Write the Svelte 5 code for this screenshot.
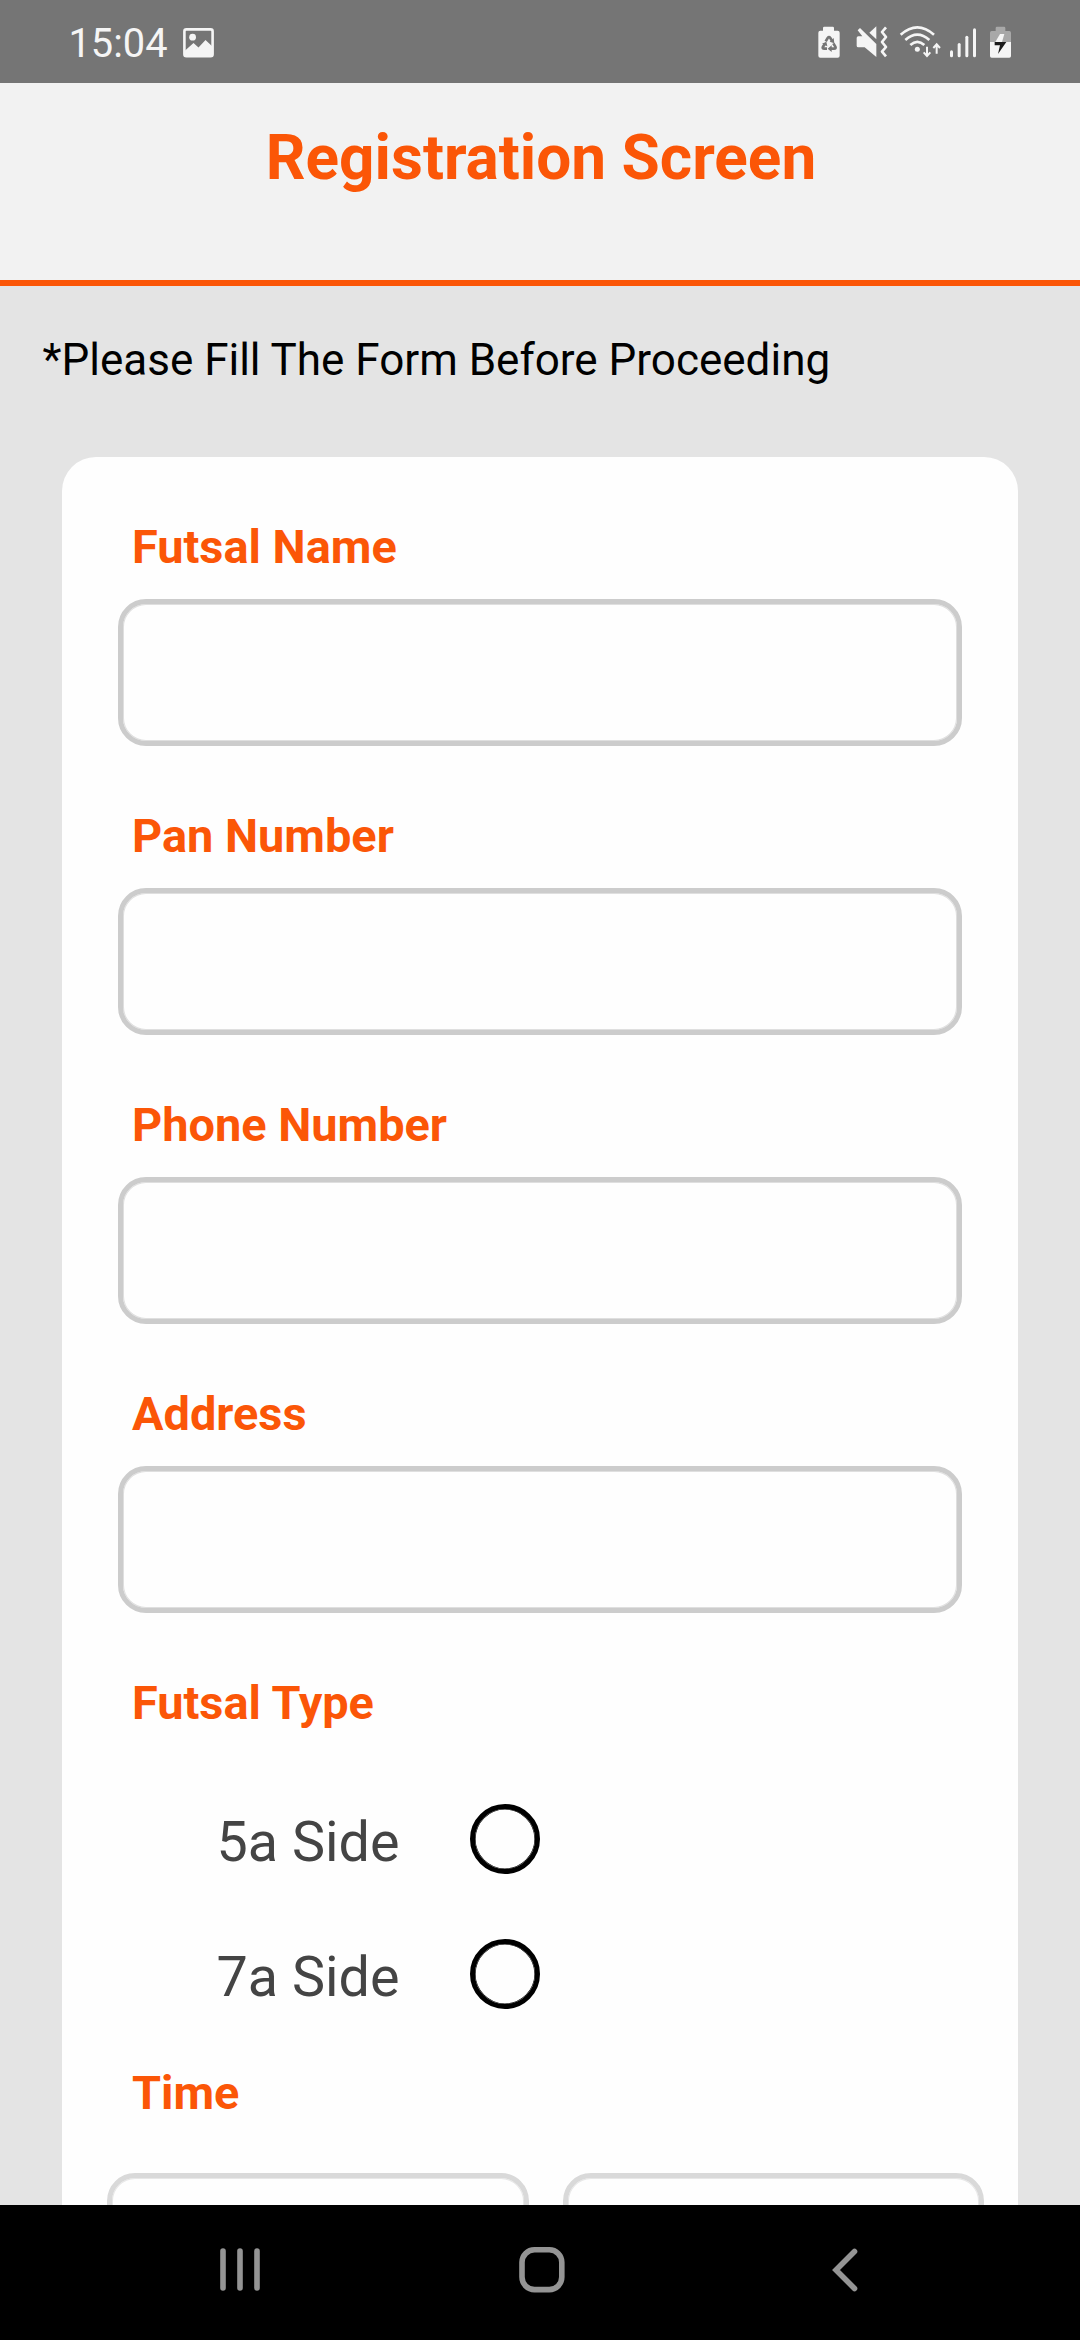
<script>
  const fields = ['Futsal Name', 'Pan Number', 'Phone Number', 'Address'];
  const types = ['5a Side', '7a Side'];
</script>

<div class="screen">
  <div class="status">
    <div class="left">
      <span class="clock">15:04</span>
      <svg class="photo" viewBox="0 0 31 30" width="31" height="30">
        <rect x="1.4" y="1.4" width="28.2" height="26.8" rx="2" fill="none" stroke="#f5f5f5" stroke-width="2.6" />
        <circle cx="9.6" cy="9.2" r="3.4" fill="#f5f5f5" />
        <path d="M1 23.5L10.5 15L15.5 19.5L22.5 12L30 19V28.5H1Z" fill="#f5f5f5" />
      </svg>
    </div>
    <svg class="indicators" viewBox="0 0 690 210" width="230" height="70" fill="#f5f5f5">
      <path d="M69 62V54q0-4 4-4H98q4 0 4 4V62H113q6 0 6 6V137q0 6-6 6H61q-6 0-6-6V68q0-6 6-6Z" />
      <g fill="none" stroke="#757575" stroke-width="8">
        <path d="M77 94L83 84Q87 79 91 84L97 94" />
        <path d="M75 101L69 110Q66 116 73 116H81" />
        <path d="M100 100L106 110Q109 116 102 116H92" />
      </g>
      <path d="M101 84L103 100L89 95ZM66 101L79 95L82 109ZM95 106V126L83 116Z" fill="#757575" />

      <path d="M170 84q0-5 5-5H187L173 61L180 54L229 102V141L194 112H175q-5 0-5-5Z" />
      <path d="M208 68L229 49V88Z" />
      <path d="M258 52L246 66L258 81L246 96L258 111L246 125L258 139" fill="none" stroke="#f5f5f5" stroke-width="8" stroke-linejoin="round" />

      <g fill="none" stroke="#f5f5f5" stroke-width="8">
        <path d="M302 74Q352 30 402 74" />
        <path d="M316 90Q352 58 388 90" />
        <path d="M331 105Q352 86 373 105" />
        <path d="M381 110V137M371 127L381 138L391 127M410 131V104M400 114L410 103L420 114" stroke-width="6" />
      </g>
      <circle cx="352" cy="118" r="7.5" />

      <rect x="450" y="121" width="9" height="21" rx="4.5" />
      <rect x="473" y="99" width="9" height="43" rx="4.5" />
      <rect x="496" y="77" width="9" height="65" rx="4.5" />
      <rect x="519" y="55" width="9" height="87" rx="4.5" />

      <path d="M570 96V68q0-5 5-5H587V54q0-4 4-4H612q4 0 4 4V63H628q5 0 5 5V96Z" fill="#a8a8a8" />
      <path d="M570 96H633V138q0 5-5 5H575q-5 0-5-5Z" />
      <path d="M600 72H613L606 96H586Z" />
      <path d="M584 96H619L594 132L600 106H584Z" fill="#1c1c1c" />
    </svg>
  </div>

  <header><h1>Registration Screen</h1></header>

  <main>
    <p class="note">*Please Fill The Form Before Proceeding</p>
    <form class="card">
      {#each fields as name}
        <label class="field">
          <span class="label">{name}</span>
          <input type="text" />
        </label>
      {/each}

      <div class="label">Futsal Type</div>
      <div class="options">
        {#each types as type}
          <div class="option">
            <span class="option-name">{type}</span>
            <span class="radio"></span>
          </div>
        {/each}
      </div>

      <div class="label time">Time</div>
      <div class="times">
        <div class="slot"></div>
        <div class="slot"></div>
      </div>
    </form>
  </main>

  <nav>
    <svg viewBox="0 0 40 46" width="40" height="46">
      <path d="M3 4V41M20 4V41M37 4V41" />
    </svg>
    <svg class="home" viewBox="0 0 46 46" width="46" height="46">
      <rect x="3" y="2.8" width="39.8" height="39.8" rx="12.5" />
    </svg>
    <svg viewBox="0 0 26 46" width="26" height="46">
      <path d="M22.5 4.5L4 23L22.5 41.5" />
    </svg>
  </nav>
</div>

<style>
  :global(body) {
    margin: 0;
    background: #000;
  }
  .screen {
    width: 1080px;
    height: 2340px;
    display: flex;
    flex-direction: column;
    overflow: hidden;
    background: #e4e4e4;
    font-family: Roboto, sans-serif;
  }
  .status {
    flex: none;
    height: 83px;
    box-sizing: border-box;
    padding: 0 50px 0 68.5px;
    display: flex;
    justify-content: space-between;
    background: #757575;
  }
  .left {
    display: flex;
    align-items: flex-start;
    gap: 14px;
  }
  .clock {
    width: 100px;
    margin-top: 20px;
    font-size: 39.8px;
    line-height: 48px;
    color: #f5f5f5;
    white-space: nowrap;
  }
  .photo {
    margin-top: 28px;
  }
  .indicators {
    margin-top: 10px;
  }
  header {
    flex: none;
    height: 203px;
    box-sizing: border-box;
    padding-top: 39px;
    background: #f2f2f2;
    border-bottom: 6px solid #fb5607;
  }
  h1 {
    margin: 0;
    padding-left: 2px;
    font-size: 62.1px;
    line-height: 72px;
    font-weight: 700;
    text-align: center;
    color: #fb5607;
  }
  main {
    flex: 1;
    min-height: 0;
    overflow: hidden;
    padding: 48px 62px 0;
  }
  .note {
    margin: 0 0 71px -19.5px;
    font-size: 44px;
    line-height: 52px;
    color: #000;
  }
  .card {
    box-sizing: border-box;
    height: 2000px;
    padding: 62px 56px 0;
    border-radius: 34px;
    background: #fefefe;
  }
  .field {
    display: flex;
    flex-direction: column;
    gap: 24px;
    margin-bottom: 62px;
  }
  .label {
    display: block;
    padding-left: 14px;
    font-size: 46.9px;
    line-height: 56px;
    font-weight: 700;
    color: #fb5607;
  }
  input {
    box-sizing: border-box;
    width: 100%;
    height: 147px;
    margin: 0;
    padding: 0 24px;
    font: inherit;
    font-size: 40px;
    background: #fefefe;
    border: 5px solid #ccc;
    border-radius: 28px;
    box-shadow: inset 0 0 0 1px #dfdfdf;
    outline: none;
  }
  .options {
    display: flex;
    flex-direction: column;
    gap: 65px;
    padding: 73px 0 0 98.5px;
  }
  .option {
    display: flex;
    height: 70px;
  }
  .option-name {
    width: 253.5px;
    padding-top: 5px;
    font-size: 55.7px;
    line-height: 66px;
    color: #444;
  }
  .radio {
    box-sizing: border-box;
    width: 70px;
    height: 70px;
    border: 5px solid #000;
    border-radius: 50%;
    box-shadow: inset 0 0 0 0.6px #000;
  }
  .time {
    margin-top: 56px;
  }
  .times {
    display: grid;
    grid-template-columns: 422px 421px;
    gap: 34px;
    margin: 52px -22px 0 -11px;
  }
  .slot {
    box-sizing: border-box;
    height: 147px;
    border: 5px solid #d9d9d9;
    border-radius: 28px;
    box-shadow: inset 0 0 0 1px #e7e7e7;
  }
  nav {
    flex: none;
    height: 135px;
    box-sizing: border-box;
    padding: 42px 222px 0 220px;
    display: flex;
    background: #000;
  }
  nav svg {
    fill: none;
    stroke: #949494;
    stroke-width: 5.6;
    stroke-linecap: round;
  }
  .home {
    margin: 0 267px 0 259px;
  }
</style>
